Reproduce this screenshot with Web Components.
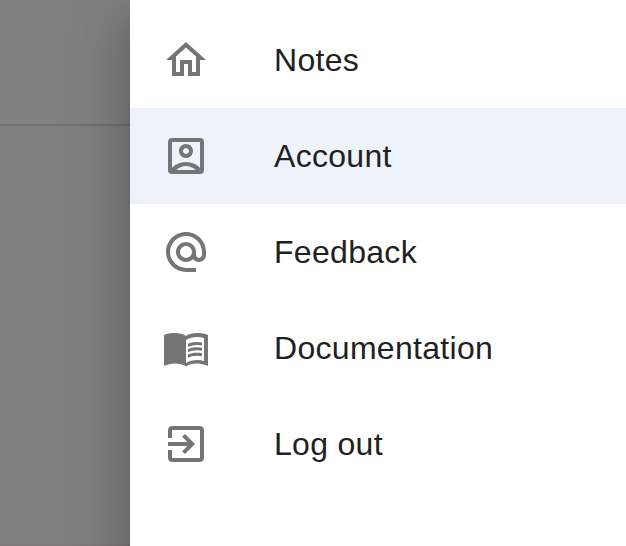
<!DOCTYPE html>
<html lang="en">
<head>
<meta charset="utf-8">
<title>Notes</title>
<style>
html, body { height: 100%; margin: 0; }
body { overflow: hidden; font-family: "Liberation Sans", Arial, sans-serif; color: #212121; }
</style>
</head>
<body>
<app-shell>
  <nav-drawer>
    <nav-item icon="home">Notes</nav-item>
    <nav-item icon="account" selected>Account</nav-item>
    <nav-item icon="at">Feedback</nav-item>
    <nav-item icon="book">Documentation</nav-item>
    <nav-item icon="exit">Log out</nav-item>
  </nav-drawer>
</app-shell>
<script>
const ICONS = {
  home: '<path d="M12 5.69l5 4.5V18h-2v-6H9v6H7v-7.81l5-4.5M12 3L2 12h3v8h6v-6h2v6h6v-8h3L12 3z"/>',
  account: '<path fill-rule="evenodd" d="M5 3h14a2 2 0 0 1 2 2v14a2 2 0 0 1-2 2H5a2 2 0 0 1-2-2V5a2 2 0 0 1 2-2zm0 2v12.85C6.77 16.09 9.25 15 12 15s5.23 1.09 7 2.85V5H5zm2.1 14h9.8A8 8 0 0 0 12 17a8 8 0 0 0-4.9 2z"/><path fill-rule="evenodd" d="M12 13c1.93 0 3.5-1.57 3.5-3.5S13.93 6 12 6 8.5 7.57 8.5 9.5 10.07 13 12 13zm0-5c.83 0 1.5.67 1.5 1.5S12.83 11 12 11s-1.5-.67-1.5-1.5S11.17 8 12 8z"/>',
  at: '<path d="M12 1.95c-5.52 0-10 4.48-10 10s4.48 10 10 10h5v-2h-5c-4.34 0-8-3.66-8-8s3.66-8 8-8 8 3.66 8 8v1.43c0 .79-.71 1.57-1.5 1.57s-1.5-.78-1.5-1.57v-1.43c0-2.76-2.24-5-5-5s-5 2.24-5 5 2.24 5 5 5c1.38 0 2.64-.56 3.54-1.47.65.89 1.77 1.47 2.96 1.47 1.97 0 3.5-1.6 3.5-3.57v-1.43c0-5.52-4.48-10-10-10zm0 13c-1.66 0-3-1.34-3-3s1.34-3 3-3 3 1.34 3 3-1.34 3-3 3z"/>',
  book: '<path fill-rule="evenodd" d="M17.5 4.5c-1.95 0-4.05.4-5.5 1.5-1.45-1.1-3.55-1.5-5.5-1.5-1.95 0-4.05.3-5.5 1v15.5c1.6-.7 3.6-1.2 5.5-1.2 1.95 0 4.05.4 5.5 1.5 1.45-1.1 3.55-1.5 5.5-1.5 1.9 0 3.9.5 5.5 1.2V5.5c-1.45-.7-3.55-1-5.5-1zm3.5 14c-1.1-.35-2.3-.5-3.5-.5-1.7 0-4.15.65-5.5 1.5V8c1.35-.85 3.8-1.5 5.5-1.5 1.2 0 2.4.15 3.5.5v11.5z"/><path d="M17.5 10.5c.88 0 1.73.09 2.5.26V9.24c-.79-.15-1.64-.24-2.5-.24-1.7 0-3.24.29-4.5.83v1.66c1.13-.64 2.7-.99 4.5-.99zM13 12.49v1.66c1.13-.64 2.7-.99 4.5-.99.88 0 1.73.09 2.5.26V11.9c-.79-.15-1.64-.24-2.5-.24-1.7 0-3.24.3-4.5.83zM17.5 14.33c-1.7 0-3.24.29-4.5.83v1.66c1.13-.64 2.7-.99 4.5-.99.88 0 1.73.09 2.5.26v-1.52c-.79-.16-1.64-.24-2.5-.24z"/>',
  exit: '<path d="M10.09 15.59L11.5 17l5-5-5-5-1.41 1.41L12.67 11H3v2h9.67l-2.58 2.59zM19 3H5c-1.11 0-2 .9-2 2v4h2V5h14v14H5v-4H3v4c0 1.1.89 2 2 2h14c1.1 0 2-.9 2-2V5c0-1.1-.9-2-2-2z"/>'
};

customElements.define('app-shell', class extends HTMLElement {
  constructor() {
    super();
    this.attachShadow({ mode: 'open' }).innerHTML = `
      <style>
        :host { display: grid; grid-template-columns: 130px 1fr; grid-template-rows: 100%; height: 100vh; background: #808080; overflow: hidden; }
        .page { display: grid; grid-template-rows: 126px 1fr; }
        .bar { border-bottom: 2px solid #707070; }
        .content { border-bottom: 1px solid #7d777b; }
      </style>
      <div class="page"><div class="bar"></div><div class="content"></div></div>
      <slot></slot>`;
  }
});

customElements.define('nav-drawer', class extends HTMLElement {
  constructor() {
    super();
    this.attachShadow({ mode: 'open' }).innerHTML = `
      <style>
        :host {
          display: block; box-sizing: border-box; height: 200vh; padding-top: 12px; background: #fff;
          box-shadow: 0 16px 20px -10px rgba(0,0,0,.2), 0 32px 48px 4px rgba(0,0,0,.14), 0 12px 60px 10px rgba(0,0,0,.12);
        }
        nav { display: flex; flex-direction: column; }
      </style>
      <nav><slot></slot></nav>`;
  }
});

customElements.define('nav-item', class extends HTMLElement {
  constructor() {
    super();
    this.attachShadow({ mode: 'open' }).innerHTML = `
      <style>
        :host { display: flex; align-items: center; box-sizing: border-box; height: 96px; padding: 0 32px; }
        :host([selected]) { background: #eef3fb; }
        svg { flex: none; width: 48px; height: 48px; margin-right: 64px; fill: #757575; }
        span { font-size: 32px; line-height: 48px; letter-spacing: .3px; white-space: nowrap; }
      </style>
      <svg viewBox="0 0 24 24" aria-hidden="true">${ICONS[this.getAttribute('icon')]}</svg>
      <span><slot></slot></span>`;
  }
});
</script>
</body>
</html>
